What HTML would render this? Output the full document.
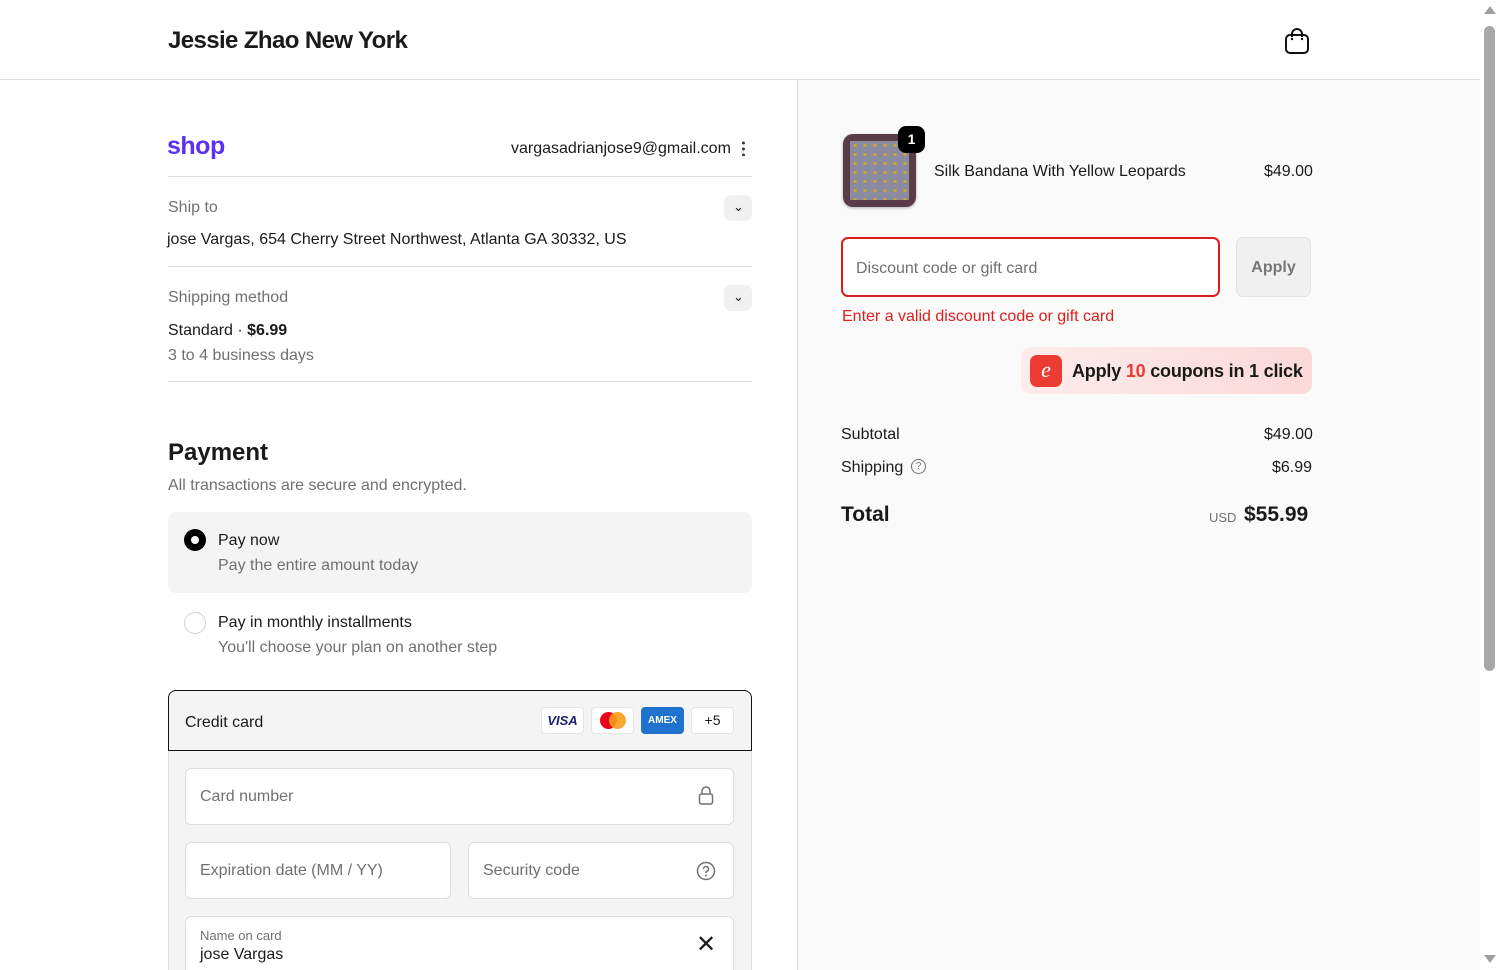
<!DOCTYPE html>
<html><head><meta charset="utf-8"><style>
*{box-sizing:border-box;margin:0;padding:0}
html,body{width:1500px;height:970px;overflow:hidden}
body{background:#fff;font-family:"Liberation Sans",sans-serif;color:#1a1a1a;position:relative}
.a{position:absolute;white-space:nowrap}
.g{color:#707070}
.chev{position:absolute;width:28px;height:26px;border-radius:7px;background:#f0f0f0}
.inp{position:absolute;background:#fff;border:1px solid #dedede;border-radius:6px;font-size:16px;color:#707070;padding-left:14px;display:flex;align-items:center}
.t{margin-top:1px}
</style></head><body>
<div class="a" style="left:168px;top:27px;font-size:24px;font-weight:bold;letter-spacing:-0.6px">Jessie Zhao New York</div>
<svg class="a" style="left:1284px;top:27px" width="26" height="28" viewBox="0 0 26 28"><rect x="2" y="8" width="22" height="18" rx="4" fill="none" stroke="#111" stroke-width="2"/><path d="M8 10V7a5 5 0 0 1 10 0v3" fill="none" stroke="#111" stroke-width="2"/><circle cx="8" cy="12" r="1.2" fill="#111"/><circle cx="18" cy="12" r="1.2" fill="#111"/></svg>
<div class="a" style="left:0;top:79px;width:1480px;height:1px;background:#dedede"></div>
<div class="a" style="left:797px;top:80px;width:683px;height:890px;background:#fafafa;border-left:1px solid #dedede"></div>
<div class="a" style="left:1480px;top:0;width:20px;height:970px;background:#fff"></div>
<div class="a" style="left:1484px;top:26px;width:11px;height:645px;border-radius:6px;background:#a8a8a8"></div>
<div class="a" style="left:1484px;top:6px;width:0;height:0;border-left:6px solid transparent;border-right:6px solid transparent;border-bottom:8px solid #a0a0a0"></div>
<div class="a" style="left:1484px;top:955px;width:0;height:0;border-left:6px solid transparent;border-right:6px solid transparent;border-top:8px solid #a0a0a0"></div>

<div class="a" style="left:167px;top:132px;font-size:25px;font-weight:bold;color:#5a31f4;letter-spacing:-0.5px">shop</div>
<div class="a" style="left:511px;top:140px;font-size:16px">vargasadrianjose9@gmail.com</div>
<div class="a" style="left:742px;top:140px;width:3px;height:16px;background:radial-gradient(circle,#333 1.3px,transparent 1.6px) 0 0/3px 6px"></div>
<div class="a" style="left:168px;top:176px;width:584px;height:1px;background:#dedede"></div>
<div class="a g" style="left:168px;top:199px;font-size:16px">Ship to</div>
<div class="chev" style="left:724px;top:195px"></div><div class="a" style="left:733px;top:199px;font-size:13px">&#8964;</div>
<div class="a" style="left:167px;top:231px;font-size:16px">jose Vargas, 654 Cherry Street Northwest, Atlanta GA 30332, US</div>
<div class="a" style="left:168px;top:266px;width:584px;height:1px;background:#dedede"></div>
<div class="a g" style="left:168px;top:289px;font-size:16px">Shipping method</div>
<div class="chev" style="left:724px;top:285px"></div><div class="a" style="left:733px;top:289px;font-size:13px">&#8964;</div>
<div class="a" style="left:168px;top:322px;font-size:16px">Standard · <b>$6.99</b></div>
<div class="a g" style="left:168px;top:347px;font-size:16px">3 to 4 business days</div>
<div class="a" style="left:168px;top:381px;width:584px;height:1px;background:#dedede"></div>

<div class="a" style="left:168px;top:439px;font-size:24px;font-weight:bold">Payment</div>
<div class="a g" style="left:168px;top:477px;font-size:16px">All transactions are secure and encrypted.</div>
<div class="a" style="left:168px;top:512px;width:584px;height:81px;background:#f4f4f4;border-radius:8px"></div>
<div class="a" style="left:184px;top:529px;width:22px;height:22px;border-radius:50%;background:#000"></div>
<div class="a" style="left:191px;top:536px;width:8px;height:8px;border-radius:50%;background:#fff"></div>
<div class="a" style="left:218px;top:532px;font-size:16px">Pay now</div>
<div class="a g" style="left:218px;top:557px;font-size:16px">Pay the entire amount today</div>
<div class="a" style="left:184px;top:612px;width:22px;height:22px;border-radius:50%;border:1px solid #d0d0d0;background:#fff"></div>
<div class="a" style="left:218px;top:614px;font-size:16px">Pay in monthly installments</div>
<div class="a g" style="left:218px;top:639px;font-size:16px">You'll choose your plan on another step</div>

<div class="a" style="left:168px;top:690px;width:584px;height:290px;background:#f4f4f4;border:1px solid #dedede;border-radius:8px"></div>
<div class="a" style="left:168px;top:690px;width:584px;height:61px;background:#f4f4f4;border:1px solid #111;border-radius:8px 8px 0 0"></div>
<div class="a" style="left:185px;top:714px;font-size:16px">Credit card</div>
<div class="a" style="left:541px;top:707px;width:43px;height:27px;background:#fff;border:1px solid #e5e5e5;border-radius:4px;font-size:13px;font-weight:bold;font-style:italic;color:#1a1f71;text-align:center;line-height:25px">VISA</div>
<div class="a" style="left:591px;top:707px;width:43px;height:27px;background:#fff;border:1px solid #e5e5e5;border-radius:4px"></div>
<div class="a" style="left:600px;top:712px;width:17px;height:17px;border-radius:50%;background:#eb001b"></div>
<div class="a" style="left:609px;top:712px;width:17px;height:17px;border-radius:50%;background:#f79e1b;opacity:.9"></div>
<div class="a" style="left:641px;top:707px;width:43px;height:27px;background:#1f72cd;border-radius:4px;color:#fff;font-size:10px;font-weight:bold;text-align:center;line-height:27px">AMEX</div>
<div class="a" style="left:691px;top:707px;width:43px;height:27px;background:#fff;border:1px solid #e5e5e5;border-radius:4px;font-size:14px;text-align:center;line-height:25px">+5</div>
<div class="inp" style="left:185px;top:768px;width:549px;height:57px"><span class="t">Card number</span></div>
<svg class="a" style="left:698px;top:786px" width="16" height="20" viewBox="0 0 16 20"><rect x="1.5" y="8" width="13" height="10" rx="2" fill="none" stroke="#707070" stroke-width="1.5"/><path d="M4 8V5a4 4 0 0 1 8 0v3" fill="none" stroke="#707070" stroke-width="1.5"/></svg>
<div class="inp" style="left:185px;top:842px;width:266px;height:57px"><span class="t">Expiration date (MM / YY)</span></div>
<div class="inp" style="left:468px;top:842px;width:266px;height:57px"><span class="t">Security code</span></div>
<svg class="a" style="left:696px;top:861px" width="20" height="20" viewBox="0 0 20 20"><circle cx="10" cy="10" r="8.5" fill="none" stroke="#707070" stroke-width="1.5"/><path d="M7.5 8a2.5 2.5 0 1 1 3.5 2.3c-.7.3-1 .8-1 1.5V12" fill="none" stroke="#707070" stroke-width="1.5"/><circle cx="10" cy="14.5" r="1" fill="#707070"/></svg>
<div class="inp" style="left:185px;top:916px;width:549px;height:70px;display:block;padding-top:11px">
<div style="font-size:13px;color:#707070">Name on card</div><div style="font-size:16px;color:#1a1a1a;margin-top:3px">jose Vargas</div></div>
<div class="a" style="left:696px;top:930px;font-size:24px">&#10005;</div>

<div class="a" style="left:843px;top:134px;width:73px;height:73px;border-radius:10px;background:#5a3c48;box-shadow:0 1px 3px rgba(0,0,0,.3)"></div>
<div class="a" style="left:850px;top:141px;width:59px;height:59px;background:#8a8aa0;background-image:radial-gradient(#c8a830 1.5px,transparent 2px);background-size:10px 9px"></div>
<div class="a" style="left:898px;top:126px;width:27px;height:27px;border-radius:8px;background:#000;color:#fff;font-size:14px;font-weight:bold;text-align:center;line-height:27px">1</div>
<div class="a" style="left:934px;top:163px;font-size:16px">Silk Bandana With Yellow Leopards</div>
<div class="a" style="left:1264px;top:163px;font-size:16px">$49.00</div>
<div class="a" style="left:841px;top:237px;width:379px;height:60px;background:#fff;border:2px solid #dd1d1d;border-radius:7px"></div>
<div class="a g" style="left:856px;top:260px;font-size:16px">Discount code or gift card</div>
<div class="a" style="left:1236px;top:237px;width:75px;height:60px;background:#f0f0f0;border:1px solid #e3e3e3;border-radius:7px;font-size:16px;font-weight:bold;color:#777;text-align:center;line-height:60px">Apply</div>
<div class="a" style="left:842px;top:308px;font-size:16px;color:#dd1d1d">Enter a valid discount code or gift card</div>
<div class="a" style="left:1021px;top:347px;width:291px;height:47px;border-radius:10px;background:linear-gradient(90deg,#fdeceb,#fbd9d9)"></div>
<div class="a" style="left:1030px;top:355px;width:32px;height:32px;border-radius:7px;background:#ec3b32;color:#fff;font-size:22px;font-style:italic;text-align:center;line-height:30px;font-family:'Liberation Serif',serif">e</div>
<div class="a" style="left:1072px;top:361px;font-size:18px;font-weight:bold;letter-spacing:-0.2px">Apply <span style="color:#ec3b32">10</span> coupons in 1 click</div>

<div class="a" style="left:841px;top:426px;font-size:16px">Subtotal</div>
<div class="a" style="left:1264px;top:426px;font-size:16px">$49.00</div>
<div class="a" style="left:841px;top:459px;font-size:16px">Shipping</div>
<div class="a" style="left:911px;top:459px;width:15px;height:15px;border:1.3px solid #707070;border-radius:50%;font-size:10px;color:#707070;text-align:center;line-height:13px">?</div>
<div class="a" style="left:1272px;top:459px;font-size:16px">$6.99</div>
<div class="a" style="left:841px;top:503px;font-size:21px;font-weight:bold">Total</div>
<div class="a g" style="left:1209px;top:510px;font-size:13px">USD</div>
<div class="a" style="left:1244px;top:503px;font-size:21px;font-weight:bold">$55.99</div>
</body></html>
